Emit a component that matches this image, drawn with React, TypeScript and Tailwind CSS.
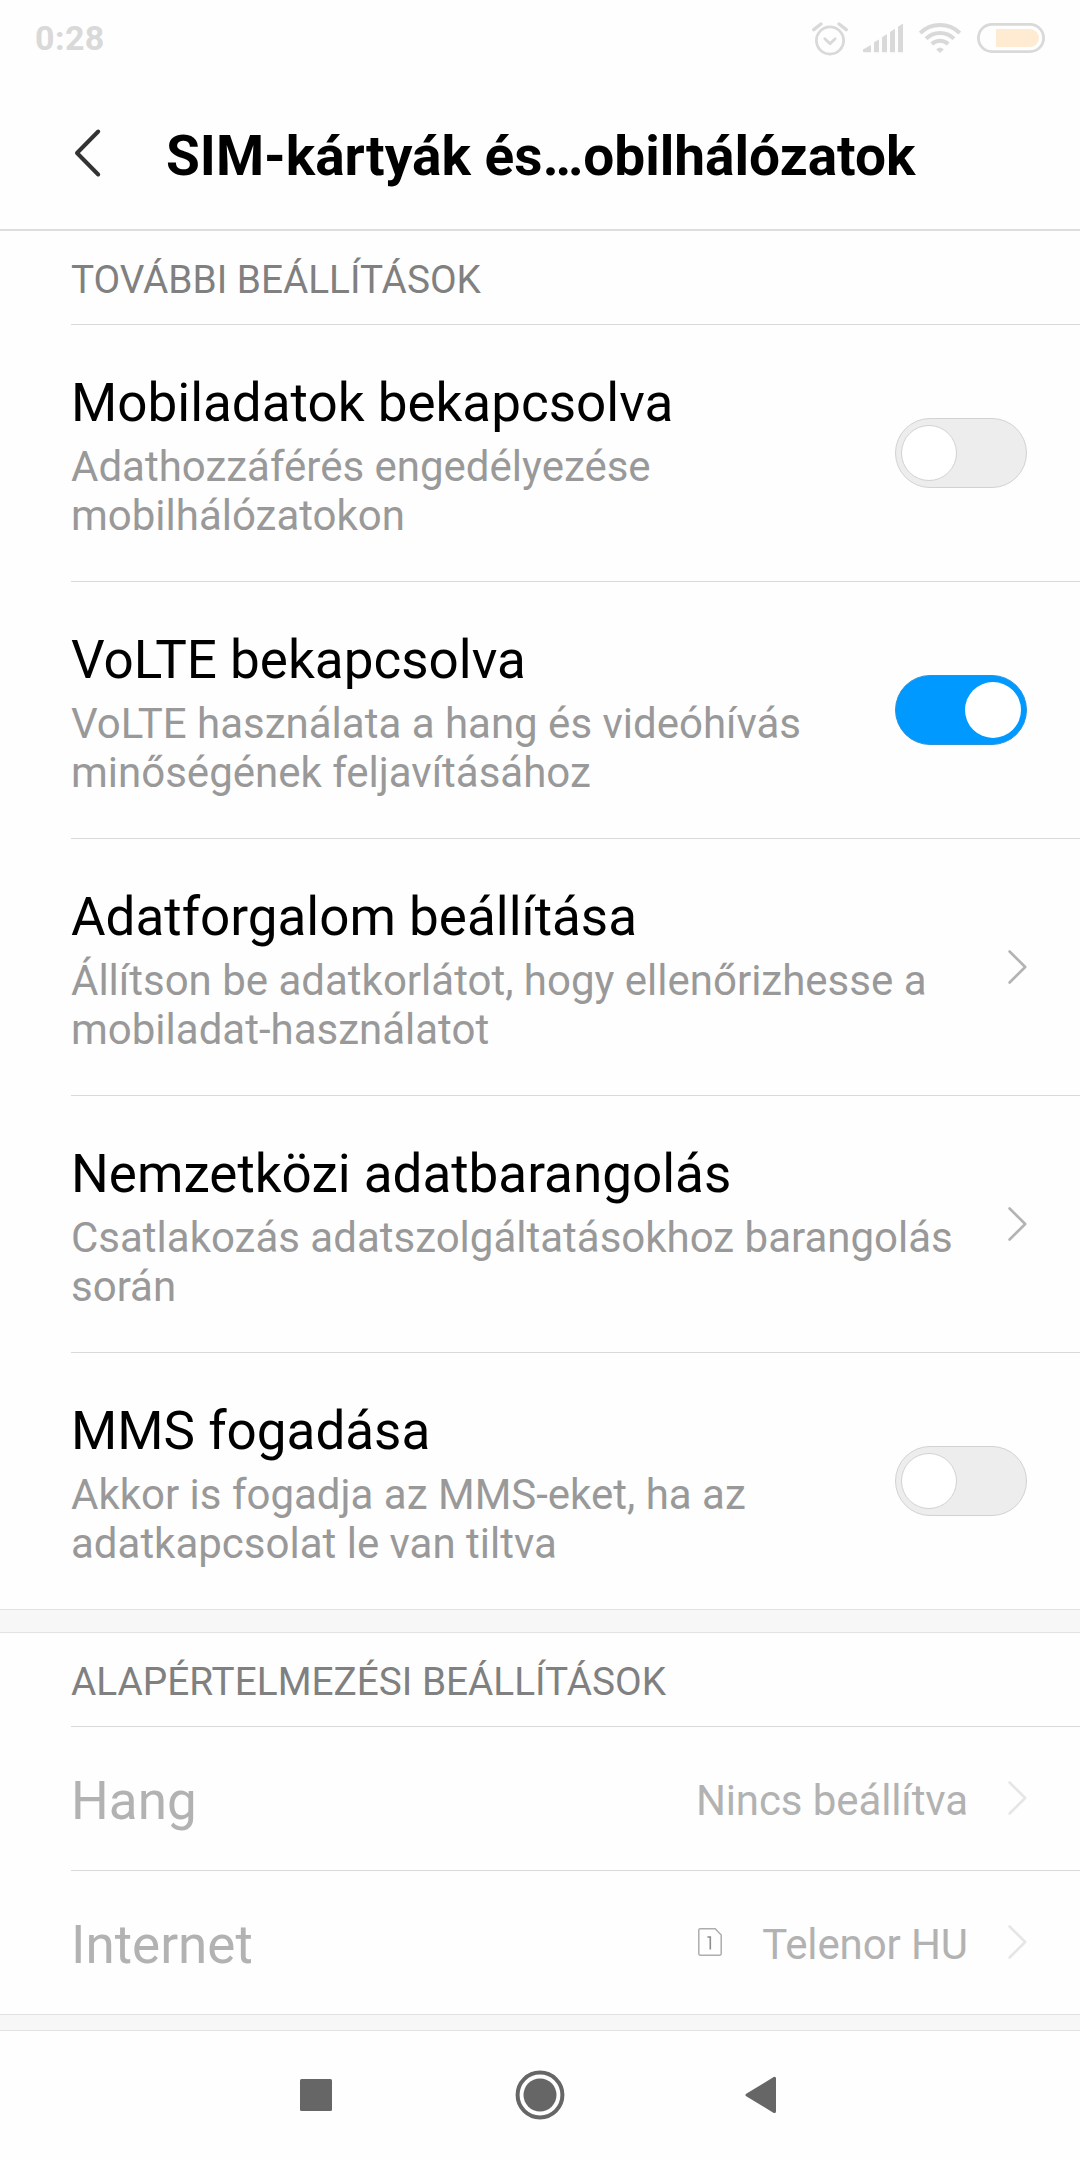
import { useState } from "react";

type ToggleItem = {
  title: string;
  summary: string;
  kind: "toggle" | "link";
  on?: boolean;
};

const items: ToggleItem[] = [
  {
    title: "Mobiladatok bekapcsolva",
    summary: "Adathozzáférés engedélyezése mobilhálózatokon",
    kind: "toggle",
    on: false,
  },
  {
    title: "VoLTE bekapcsolva",
    summary: "VoLTE használata a hang és videóhívás minőségének feljavításához",
    kind: "toggle",
    on: true,
  },
  {
    title: "Adatforgalom beállítása",
    summary: "Állítson be adatkorlátot, hogy ellenőrizhesse a mobiladat-használatot",
    kind: "link",
  },
  {
    title: "Nemzetközi adatbarangolás",
    summary: "Csatlakozás adatszolgáltatásokhoz barangolás során",
    kind: "link",
  },
  {
    title: "MMS fogadása",
    summary: "Akkor is fogadja az MMS-eket, ha az adatkapcsolat le van tiltva",
    kind: "toggle",
    on: false,
  },
];

function StatusBar() {
  return (
    <div className="flex h-[76px] shrink-0 items-center justify-between pl-[35px] pr-[35px] text-[#d9d9d9]">
      <span className="text-[34px] font-bold leading-[40px] tracking-[0.4px]">0:28</span>
      <div className="flex items-center">
        {/* alarm */}
        <svg width="36" height="36" viewBox="0 0 36 36" fill="none" stroke="currentColor" strokeLinecap="round">
          <circle cx="18" cy="20.5" r="13.6" strokeWidth="2.8" />
          <path d="M12.8 18.8l5.2 4.8 5.2-4.8" strokeWidth="2.8" strokeLinejoin="round" />
          <path d="M1.8 9.6L9 4M34.2 9.6L27 4" strokeWidth="3.4" />
        </svg>
        {/* signal */}
        <svg className="ml-[15px]" width="40" height="30" viewBox="0 0 40 30" fill="currentColor">
          <path d="M0 26.6L8 22v7.2H1Q0 29.2 0 28.2Z" />
          <path d="M11 19.2L16 16.4v12.8h-5Z" />
          <path d="M19 14.2L24 11v18.2h-5Z" />
          <path d="M27 9L32 5.8v23.4h-5Z" />
          <path d="M35 3.8L40 0.4v28.8h-5Z" />
        </svg>
        {/* wifi */}
        <svg className="ml-4" width="42" height="32" viewBox="0 0 42 32" fill="none" stroke="currentColor" strokeWidth="4">
          <path d="M1.2 11Q9.5 3 21 3t19.8 8" />
          <path d="M7 16.6Q13 10.9 21 10.9t14 5.7" />
          <path d="M12.8 22Q16.6 18.8 21 18.8t8.2 3.2" />
          <path d="M17.2 27.4Q21 23.8 24.8 27.4L21 31Z" fill="currentColor" stroke="none" />
        </svg>
        {/* battery */}
        <svg className="ml-4" width="68" height="30" viewBox="0 0 68 30" fill="none">
          <rect x="1.4" y="1.4" width="65.2" height="27.2" rx="13.6" stroke="currentColor" strokeWidth="2.8" />
          <path d="M20 6h33a9 9 0 0 1 0 18H20a1 1 0 0 1-1-1V7a1 1 0 0 1 1-1Z" fill="#feebd2" />
        </svg>
      </div>
    </div>
  );
}

function Header() {
  return (
    <header className="flex h-[155px] shrink-0 items-center border-b-2 border-[#dedede] pl-[74px]">
      <svg width="28" height="50" viewBox="0 0 28 50" fill="none" stroke="#333" strokeWidth="4" strokeLinecap="round" strokeLinejoin="round">
        <path d="M24.2 3.5L3 25l21.2 21.5" />
      </svg>
      <h1 className="ml-[64px] mt-[7px] text-[55px] font-bold leading-[64px] text-black">
        SIM-kártyák és…obilhálózatok
      </h1>
    </header>
  );
}

function SectionTitle({ children }: { children: string }) {
  return (
    <h2 className="ml-[71px] flex h-[94px] shrink-0 items-center border-b border-[#d9d9d9] pt-[3px] text-[38.75px] leading-[45px] text-[#808080]">
      {children}
    </h2>
  );
}

function Chevron({ color = "#b3b3b3" }: { color?: string }) {
  return (
    <svg className="mb-px shrink-0" width="19" height="34" viewBox="0 0 19 34" fill="none" stroke={color} strokeWidth="2.6" strokeLinecap="round" strokeLinejoin="round">
      <path d="M1.6 1.5L17.2 17 1.6 32.5" />
    </svg>
  );
}

function Switch({ defaultOn }: { defaultOn?: boolean }) {
  const [on, setOn] = useState(!!defaultOn);
  return (
    <button
      role="switch"
      aria-checked={on}
      onClick={() => setOn(!on)}
      className={`flex h-[70px] w-[132px] shrink-0 items-center rounded-full border px-[5px] ${
        on ? "justify-end border-[#2b93dc] bg-[#0099ff]" : "justify-start border-[#d2d2d2] bg-[#ededed]"
      }`}
    >
      <span className={`size-14 rounded-full bg-white ${on ? "" : "border border-[#d2d2d2]"}`} />
    </button>
  );
}

function SettingRow({ item, last }: { item: ToggleItem; last: boolean }) {
  return (
    <div
      className={`ml-[71px] flex shrink-0 items-center justify-between pr-[53px] ${
        last ? "h-[256px]" : "h-[257px] border-b border-[#d9d9d9]"
      }`}
    >
      <div className={`pt-[6px] ${item.kind === "toggle" ? "w-[760px]" : "w-[900px]"}`}>
        <div className="text-[53px] leading-[61px] text-black">{item.title}</div>
        <div className="mt-[8px] text-[42px] leading-[49px] text-[#999]">{item.summary}</div>
      </div>
      {item.kind === "toggle" ? <Switch defaultOn={item.on} /> : <Chevron />}
    </div>
  );
}

function SimIcon() {
  return (
    <svg className="mb-px mr-[40px]" width="24" height="28" viewBox="0 0 24 28" fill="none">
      <path d="M2.2.8h15L23.2 7v18.8a1.4 1.4 0 0 1-1.4 1.4H2.2A1.4 1.4 0 0 1 .8 25.8V2.2A1.4 1.4 0 0 1 2.2.8Z" stroke="#adadad" strokeWidth="1.5" />
      <path d="M9.4 9h2.9v12.6" stroke="#8c8c8c" strokeWidth="1.6" />
    </svg>
  );
}

function DefaultRow({ label, value, sim, last }: { label: string; value: string; sim?: boolean; last?: boolean }) {
  return (
    <div
      className={`ml-[71px] flex shrink-0 items-center pr-[53px] text-[#b2b2b2] ${
        last ? "h-[143px]" : "h-36 border-b border-[#d9d9d9]"
      }`}
    >
      <span className="flex-1 pt-[5px] text-[53px] leading-[61px]">{label}</span>
      {sim && <SimIcon />}
      <span className="mr-[40px] pt-[4px] text-[42px] leading-[49px] tracking-[-0.1px]">{value}</span>
      <Chevron color="#e6e6e6" />
    </div>
  );
}

function NavBar() {
  return (
    <nav className="flex flex-1 items-center justify-center pb-px text-[#666]">
      <svg width="32" height="32" viewBox="0 0 32 32" fill="currentColor">
        <rect width="32" height="32" rx="1.5" />
      </svg>
      <svg className="ml-[183px] mr-[180px]" width="50" height="50" viewBox="0 0 50 50" fill="currentColor">
        <circle cx="25" cy="25" r="22.4" fill="none" stroke="currentColor" strokeWidth="4" />
        <circle cx="25" cy="25" r="16.5" />
      </svg>
      <svg className="mr-[3px]" width="32" height="38" viewBox="0 0 32 38" fill="currentColor" stroke="currentColor" strokeWidth="3" strokeLinejoin="round">
        <path d="M2 19L29.5 2.4v33.2Z" />
      </svg>
    </nav>
  );
}

export default function App() {
  return (
    <div className="flex h-[2160px] w-[1080px] flex-col overflow-hidden bg-[#fefefe] font-['Roboto',sans-serif]">
      <StatusBar />
      <Header />
      <SectionTitle>TOVÁBBI BEÁLLÍTÁSOK</SectionTitle>
      {items.map((item, i) => (
        <SettingRow key={item.title} item={item} last={i === items.length - 1} />
      ))}
      <div className="h-6 shrink-0 border-y border-[#e2e2e2] bg-[#f7f7f7]" />
      <SectionTitle>ALAPÉRTELMEZÉSI BEÁLLÍTÁSOK</SectionTitle>
      <DefaultRow label="Hang" value="Nincs beállítva" />
      <DefaultRow label="Internet" value="Telenor HU" sim last />
      <div className="h-[17px] shrink-0 border-y border-[#e2e2e2] bg-[#f7f7f7]" />
      <NavBar />
    </div>
  );
}
